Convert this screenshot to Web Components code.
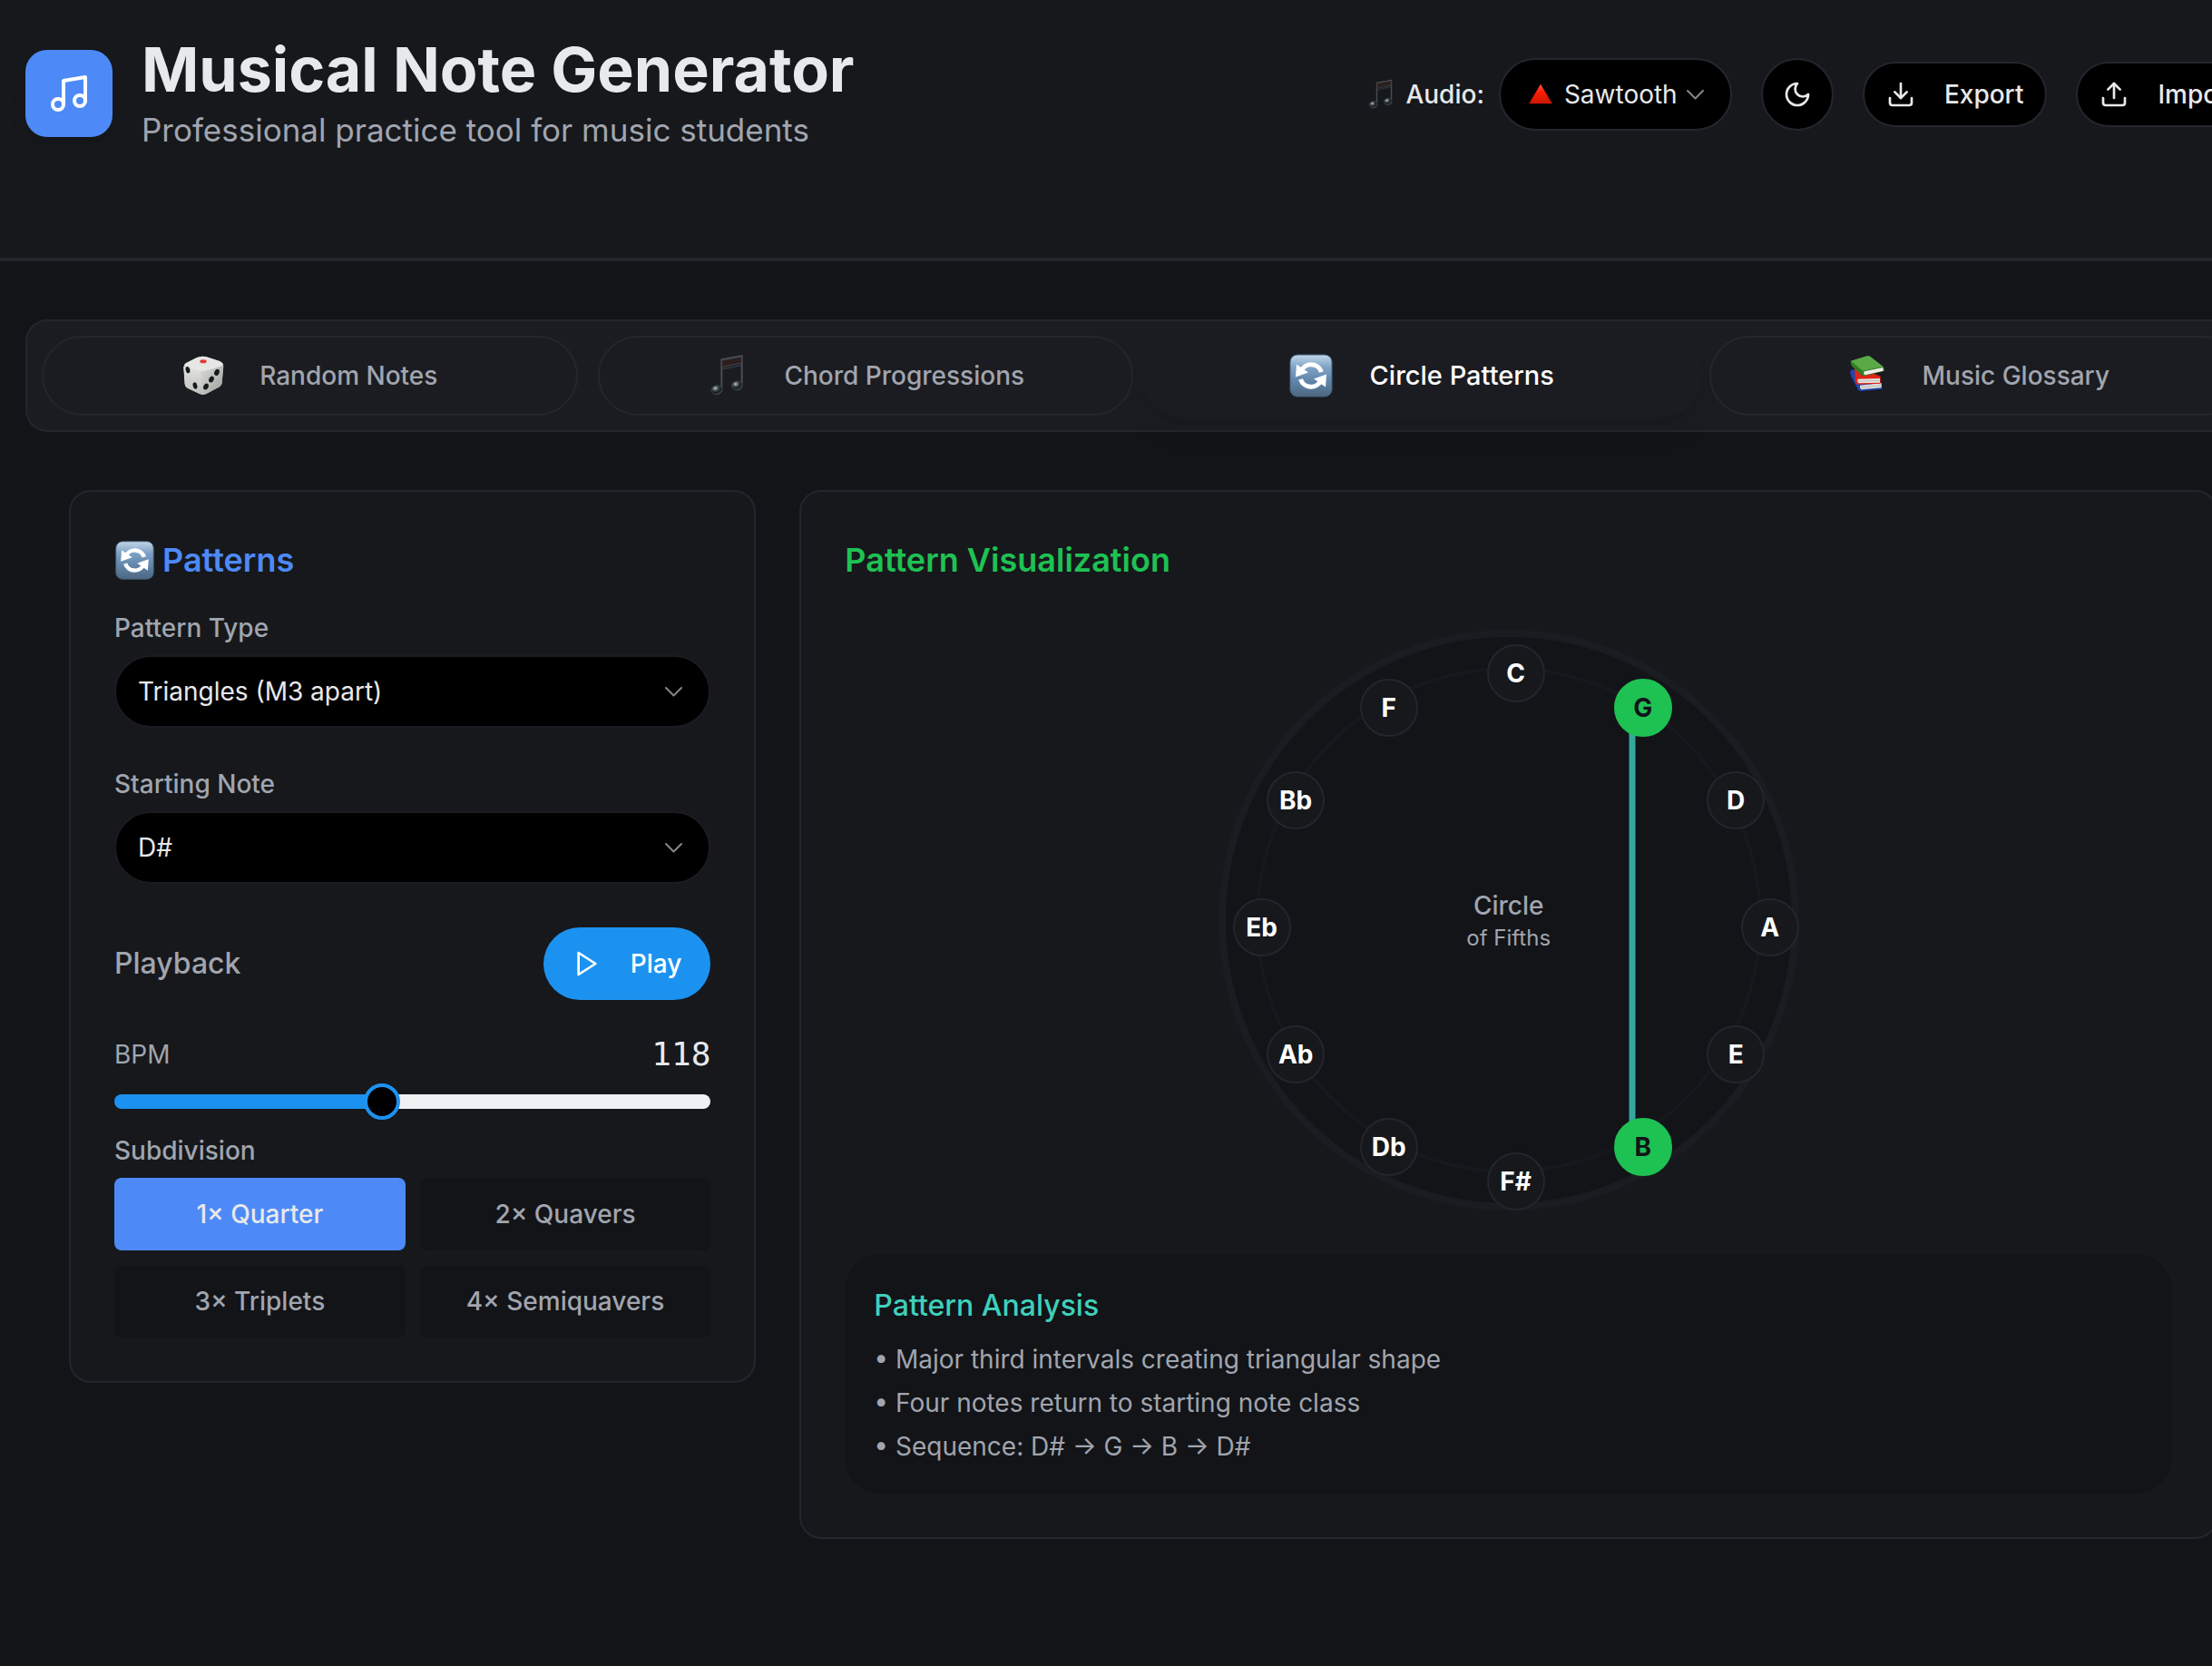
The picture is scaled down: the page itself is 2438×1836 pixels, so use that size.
<!DOCTYPE html>
<html lang="en">
<head>
<meta charset="utf-8">
<title>Musical Note Generator</title>
<style>
  html, body { margin: 0; min-height: 100%; background: #121418; }
  body { font-family: Inter, "Liberation Sans", sans-serif; color: #e8e9eb; }
</style>
</head>
<body>
<note-app></note-app>

<script>
const ICONS = {
  music: `<svg viewBox="0 0 24 24" fill="none" stroke="currentColor" stroke-width="2" stroke-linecap="round" stroke-linejoin="round"><path d="M9 18V5l12-2v13"/><circle cx="6" cy="18" r="3"/><circle cx="18" cy="16" r="3"/></svg>`,
  moon: `<svg viewBox="0 0 24 24" fill="none" stroke="currentColor" stroke-width="2" stroke-linecap="round" stroke-linejoin="round"><path d="M12 3a6 6 0 0 0 9 9 9 9 0 1 1-9-9Z"/></svg>`,
  download: `<svg viewBox="0 0 24 24" fill="none" stroke="currentColor" stroke-width="2" stroke-linecap="round" stroke-linejoin="round"><path d="M21 15v4a2 2 0 0 1-2 2H5a2 2 0 0 1-2-2v-4"/><path d="m7 10 5 5 5-5"/><path d="M12 15V3"/></svg>`,
  upload: `<svg viewBox="0 0 24 24" fill="none" stroke="currentColor" stroke-width="2" stroke-linecap="round" stroke-linejoin="round"><path d="M21 15v4a2 2 0 0 1-2 2H5a2 2 0 0 1-2-2v-4"/><path d="m17 8-5-5-5 5"/><path d="M12 3v12"/></svg>`,
  play: `<svg viewBox="0 0 24 24" fill="none" stroke="currentColor" stroke-width="2" stroke-linecap="round" stroke-linejoin="round"><path d="M5 3l14 9-14 9z"/></svg>`,
  chevron: `<svg viewBox="0 0 24 24" fill="none" stroke="currentColor" stroke-width="2" stroke-linecap="round" stroke-linejoin="round"><path d="M3 8l8.500 8.500L20 8"/></svg>`,
  triangle: `<svg viewBox="0 0 35 35"><defs><linearGradient id="t" x1="0" y1="0" x2="0" y2="1"><stop offset="0" stop-color="#ff5a40"/><stop offset=".4" stop-color="#ff1d05"/><stop offset="1" stop-color="#c91602"/></linearGradient></defs><path d="M17.500 6.500L30 27.500H5z" fill="url(#t)"/></svg>`,
  dice: `<svg viewBox="20 15 150 150"><defs><linearGradient id="l" x1="0" y1="0" x2="0" y2="1"><stop offset="0" stop-color="#e2e3e1"/><stop offset="1" stop-color="#bfc0bd"/></linearGradient><linearGradient id="r" x1="0" y1="0" x2="1" y2="1"><stop offset="0" stop-color="#dadbd9"/><stop offset="1" stop-color="#9c9e9b"/></linearGradient></defs>
    <path d="M27 62Q27 54 35 48L70 31Q86 23 102 28L146 42Q158 47 159 58L154 114Q153 122 146 127L102 150Q92 155 80 150L40 131Q32 127 31 118Z" fill="#cbccca"/>
    <path d="M27 60L80 76Q90 80 89 92L87 152L80 150L40 131Q32 127 31 118Z" fill="url(#l)"/>
    <path d="M87 88Q88 78 98 74L158 54L154 114Q153 122 146 127L102 150Q94 154 87 152Z" fill="url(#r)"/>
    <path d="M30 54Q32 50 38 47L70 31Q86 23 102 28L146 42Q153 45 157 50Q157 57 146 60L98 74Q88 78 78 75L38 63Q31 60 30 54Z" fill="#e6e7e5"/>
    <ellipse cx="92" cy="43" rx="11" ry="6" fill="#e23a35"/>
    <g fill="#171a1c"><ellipse cx="41" cy="71" rx="7" ry="11" transform="rotate(-14 41 71)"/><ellipse cx="65" cy="123" rx="7" ry="11" transform="rotate(-14 65 123)"/><ellipse cx="137" cy="79" rx="8" ry="11" transform="rotate(24 137 79)"/><ellipse cx="119" cy="102" rx="8" ry="11" transform="rotate(24 119 102)"/><ellipse cx="101" cy="126" rx="8" ry="11" transform="rotate(24 101 126)"/></g></svg>`,
  notes: `<svg viewBox="7 15 150 150"><defs><radialGradient id="n" cx=".4" cy=".3" r=".75"><stop offset="0" stop-color="#c9cfd4"/><stop offset=".3" stop-color="#4d555c"/><stop offset=".65" stop-color="#14181c"/><stop offset="1" stop-color="#46525b"/></radialGradient></defs>
    <path d="M59 130V37L126 25V115" fill="none" stroke="#454e56" stroke-width="6" stroke-linejoin="round"/>
    <path d="M60 39L125 27V48L60 62Z" fill="#2a1f1e" stroke="#48474b" stroke-width="3"/>
    <path d="M64 68L123 56" stroke="#3b4851" stroke-width="3"/>
    <ellipse cx="43" cy="137" rx="18" ry="15" fill="url(#n)" stroke="#414e57" stroke-width="2" transform="rotate(-10 43 137)"/>
    <ellipse cx="110" cy="123" rx="18" ry="15" fill="url(#n)" stroke="#414e57" stroke-width="2" transform="rotate(-10 110 123)"/></svg>`,
  books: `<svg viewBox="17 15 150 150">
    <path d="M35 76L44 68L136 112L142 134L71 141Q64 141 61 135L39 92Z" fill="#2146b0"/><path d="M68 122L139 114V130L72 136Q66 130 68 122Z" fill="#dcdcda"/><path d="M71 129L138 122" stroke="#aaa" stroke-width="2"/>
    <path d="M50 68L58 62L136 92V116L62 119Q54 118 53 110Z" fill="#dd2619"/><path d="M61 101L134 99V113L63 115Q57 109 61 101Z" fill="#e6e3df"/><path d="M62 109L133 106" stroke="#aaa" stroke-width="2"/>
    <path d="M37 42L92 25Q98 24 102 27L146 62L149 74L84 91Q78 92 72 87L42 59Q36 50 37 42Z" fill="#2f7d24"/><path d="M38 41L92 25Q98 24 102 27L145 60L84 73Q77 75 72 70Z" fill="#5aa946"/><path d="M82 76L144 63L145 74L85 88Q78 85 82 76Z" fill="#efeeea"/></svg>`,
  sync: `<svg viewBox="0 0 50 50"><defs><linearGradient id="s" x1="0" y1="0" x2="0" y2="1"><stop offset="0" stop-color="#c3d6e8"/><stop offset=".3" stop-color="#7ea3c6"/><stop offset=".6" stop-color="#6388ad"/><stop offset="1" stop-color="#4c6780"/></linearGradient></defs><rect x="2" y="2" width="46" height="46" rx="8" fill="url(#s)" stroke="#45617c" stroke-width="1"/>
    <g id="a"><path d="M14 20A12 12 0 0 1 36.500 21" fill="none" stroke="#fff" stroke-width="5"/><path d="M9 12.500L8 26.500L22 21.500Z" fill="#fff"/></g><use href="#a" transform="rotate(180 25 25)"/></svg>`
};

const define = (name, html, setup) => customElements.define(name, class extends HTMLElement {
  connectedCallback() {
    if (this.shadowRoot) return;
    const root = this.attachShadow({ mode: "open" });
    root.innerHTML = typeof html === "function" ? html(this) : html;
    if (setup) setup(this, root);
  }
});

const RESET = `*, *::before, *::after { box-sizing: border-box; } button, select, input { font: inherit; color: inherit; margin: 0; } h1, h2, h3, p, ul { margin: 0; padding: 0; }`;

define("ui-icon", el => `
  <style>:host { display: block; flex: none; width: var(--icon, 32px); height: var(--icon, 32px); } svg { display: block; width: 100%; height: 100%; }</style>
  ${ICONS[el.getAttribute("name")]}`);

/* Pill button with an optional leading icon */
define("ui-button", el => `
  <style>${RESET}
    :host { display: block; flex: none; }
    button { display: flex; align-items: center; justify-content: center; gap: 32px; height: 72px; padding: 0 24px; border: 2px solid #24262e; border-radius: 36px; background: #000; font-size: 28px; line-height: 40px; font-weight: 500; }
    :host([round]) button { width: 80px; height: 80px; padding: 0; border-radius: 40px; }
    :host([primary]) button { height: 80px; padding: 0 32px; border: 0; border-radius: 40px; background: #1c92f0; color: #fff; }
  </style>
  <button type="button" ${el.title ? `aria-label="${el.title}"` : ""}><ui-icon name="${el.getAttribute("icon")}"></ui-icon>${el.hasAttribute("round") ? "" : "<slot></slot>"}</button>`);

/* Labelled drop-down */
define("ui-select", el => `
  <style>${RESET}
    :host { display: flex; flex-direction: column; gap: 10px; }
    label { display: flex; align-items: center; gap: 8px; font-size: 28px; line-height: 40px; color: #a1a5ae; font-weight: 500; }
    .box { display: flex; align-items: center; height: 80px; padding: 0 26px 0 24px; border: 2px solid #1b1c21; border-radius: 40px; background: #000; color: #e8e9eb; }
    select { flex: 1; min-width: 0; height: 100%; padding: 0; border: 0; outline: 0; appearance: none; background: none; font-size: 28px; line-height: 40px; }
    .chevron { --icon: 24px; color: #85868a; pointer-events: none; }
    :host([inline]) { flex-direction: row; align-items: center; gap: 16px; }
    :host([inline]) label { color: #e8e9eb; }
    :host([inline]) .box { gap: 8px; padding: 0 26px; border-color: #24262e; }
    .emoji { --icon: 36px; }
  </style>
  <label for="s">${el.hasAttribute("inline") ? `<ui-icon class="emoji" name="notes"></ui-icon>` : ""}${el.getAttribute("label")}</label>
  <div class="box">${el.hasAttribute("inline") ? `<ui-icon class="emoji" name="triangle"></ui-icon>` : ""}
    <select id="s"><option>${el.getAttribute("value")}</option></select><ui-icon class="chevron" name="chevron"></ui-icon></div>`);

define("app-header", `
  <style>${RESET}
    :host { display: flex; align-items: flex-start; justify-content: space-between; padding: 36px 28px 112px; border-bottom: 4px solid #24262e; background: #16181c; }
    .brand, .tools { display: flex; align-items: center; }
    .brand { gap: 32px; }
    .tools { gap: 32px; height: 136px; }
    .logo { display: grid; place-items: center; width: 96px; height: 96px; border-radius: 24px; background: #4d8af7; color: #fff; --icon: 48px; box-shadow: 0 20px 30px -6px rgba(0,0,0,.06), 0 8px 12px -8px rgba(0,0,0,.06); }
    h1 { font-size: 68px; line-height: 80px; font-weight: 700; }
    p { font-size: 35px; line-height: 54px; color: #a1a5ae; }
  </style>
  <div class="brand">
    <div class="logo"><ui-icon name="music"></ui-icon></div>
    <div><h1>Musical Note Generator</h1><p>Professional practice tool for music students</p></div>
  </div>
  <div class="tools">
    <ui-select inline label="Audio:" value="Sawtooth"></ui-select>
    <ui-button round icon="moon" title="Toggle theme"></ui-button>
    <ui-button icon="download">Export</ui-button>
    <ui-button icon="upload">Import</ui-button>
  </div>`);

define("nav-tab", el => `
  <style>${RESET}
    :host { display: block; }
    button { display: flex; align-items: center; justify-content: center; gap: 36px; width: 100%; height: 88px; padding: 0; border: 2px solid #24262e; border-radius: 44px; background: none; color: #a1a5ae; font-size: 28px; line-height: 40px; font-weight: 500; --icon: 50px; }
    /* The selected tab grows slightly over its neighbours' gaps */
    :host([selected]) { margin: -2px -14px; }
    :host([selected]) button { gap: 40px; height: 92px; border-color: transparent; border-radius: 46px; background: #1b1c21; color: #fff; font-size: 29px; box-shadow: 0 20px 30px -6px rgba(0,0,0,.07), 0 8px 12px -8px rgba(0,0,0,.07); }
  </style>
  <button type="button" role="tab" aria-selected="${el.hasAttribute("selected")}"><ui-icon name="${el.getAttribute("icon")}"></ui-icon><slot></slot></button>`);

define("nav-tabs", `
  <style>${RESET}
    :host { display: grid; grid-template-columns: repeat(4, 1fr); gap: 22px; padding: 16px; border: 2px solid #24262e; border-radius: 24px; background: #1b1c21; }
  </style><slot></slot>`);

define("panel-card", el => `
  <style>${RESET}
    :host { display: block; padding: 48px; border: 2px solid #24262e; border-radius: 24px; background: #16181c; box-sizing: border-box; }
    h2 { display: flex; align-items: center; gap: 8px; margin-bottom: var(--title-gap, 28px); font-size: 36px; line-height: 54px; font-weight: 600; color: var(--title); --icon: 45px; }
  </style>
  <h2>${el.hasAttribute("icon") ? `<ui-icon name="${el.getAttribute("icon")}"></ui-icon>` : ""}<span>${el.getAttribute("heading")}</span></h2><slot></slot>`);

define("bpm-slider", `
  <style>${RESET}
    :host { display: block; }
    .row { display: flex; align-items: center; justify-content: space-between; height: 56px; margin-bottom: 4px; }
    label { font-size: 28px; line-height: 40px; color: #a1a5ae; }
    output { font: 36px/56px "DejaVu Sans Mono", monospace; }
    input { display: block; width: 100%; height: 40px; appearance: none; background: none; --pos: calc(20px + (100% - 40px) * .446); }
    input::-webkit-slider-runnable-track { height: 16px; border-radius: 8px; background: linear-gradient(to right, #1c92f0 var(--pos), #eff1f3 var(--pos)); }
    input::-webkit-slider-thumb { appearance: none; width: 40px; height: 40px; margin-top: -12px; border: 4px solid #1c92f0; border-radius: 50%; background: #000; }
  </style>
  <div class="row"><label for="bpm">BPM</label><output for="bpm">118</output></div>
  <input id="bpm" type="range" min="60" max="190" value="118">`);

define("subdivision-picker", `
  <style>${RESET}
    :host { display: block; }
    p { margin-bottom: 10px; font-size: 28px; line-height: 40px; font-weight: 500; color: #a1a5ae; }
    div { display: grid; grid-template-columns: 1fr 1fr; gap: 16px; }
    button { height: 80px; padding: 0; border: 0; border-radius: 8px; background: #121418; color: #a1a5ae; font-size: 28px; line-height: 40px; font-weight: 500; }
    button[aria-pressed=true] { background: #4d8af7; color: #e8e9eb; }
  </style>
  <p id="t">Subdivision</p>
  <div role="group" aria-labelledby="t">
    <button type="button" aria-pressed="true">1× Quarter</button><button type="button">2× Quavers</button>
    <button type="button">3× Triplets</button><button type="button">4× Semiquavers</button>
  </div>`);

define("pattern-controls", `
  <style>${RESET}
    :host { display: block; }
    .fields { display: grid; gap: 42px; }
    .play { display: flex; align-items: center; justify-content: space-between; margin: 48px 0 32px; }
    .play h3 { font-size: 32px; line-height: 50px; font-weight: 500; color: #a1a5ae; }
    subdivision-picker { margin-top: 14px; }
  </style>
  <div class="fields">
    <ui-select label="Pattern Type" value="Triangles (M3 apart)"></ui-select>
    <ui-select label="Starting Note" value="D#"></ui-select>
  </div>
  <div class="play"><h3>Playback</h3><ui-button primary icon="play">Play</ui-button></div>
  <bpm-slider></bpm-slider>
  <subdivision-picker></subdivision-picker>`);

/* Circle of fifths: note pins sit on a 280px radius */
define("fifths-circle", `
  <style>${RESET}
    :host { display: block; position: relative; width: 640px; height: 640px; margin: 0 auto; border: 8px solid #1b1c21; border-radius: 50%; background: #121418; box-sizing: border-box; }
    .center { display: grid; align-content: center; justify-items: center; height: 100%; color: #a1a5ae; }
    .center b { font-size: 28px; line-height: 40px; font-weight: 500; }
    .center span { font-size: 24px; line-height: 32px; }
    svg { position: absolute; inset: -8px; width: 640px; height: 640px; }
    .note { position: absolute; display: grid; place-items: center; width: 64px; height: 64px; margin: -32px; left: calc(320px + 280px * sin(var(--a))); top: calc(320px - 280px * cos(var(--a))); border: 2px solid #24252d; border-radius: 50%; background: #16181c; color: #fff; font-size: 28px; line-height: 40px; font-weight: 700; }
    .note.on { border-color: #1ec253; background: #1ec253; color: #121418; }
  </style>
  <div class="center"><b>Circle</b><span>of Fifths</span></div>
  <svg viewBox="0 0 640 640"><circle cx="320" cy="320" r="277" fill="none" stroke="#17181d" stroke-width="4"/><path d="M456 100V550" stroke="#35a89d" stroke-width="7"/></svg>`,
  (el, root) => {
    const active = ["G", "B"];
    "C G D A E B F# Db Ab Eb Bb F".split(" ").forEach((name, i) => {
      const pin = document.createElement("div");
      pin.className = active.includes(name) ? "note on" : "note";
      pin.style.setProperty("--a", i * 30 + "deg");
      pin.textContent = name;
      root.append(pin);
    });
  });

define("pattern-analysis", `
  <style>${RESET}
    :host { display: block; margin-top: 48px; padding: 32px; border-radius: 40px; background: #121418; }
    h3 { margin-bottom: 14px; font-size: 32px; line-height: 50px; font-weight: 500; color: #3fd0bb; }
    ul { display: grid; gap: 8px; list-style: none; font-size: 28px; line-height: 40px; color: #a1a5ae; }
  </style>
  <h3>Pattern Analysis</h3>
  <ul><li>• Major third intervals creating triangular shape</li><li>• Four notes return to starting note class</li><li>• Sequence: D# → G → B → D#</li></ul>`);

define("note-app", `
  <style>${RESET}
    :host { display: block; overflow: hidden; min-height: 100vh; background: #121418; }
    /* The toolbar and grid run a little past the right edge of the window */
    .page { width: calc(100% + 82px); }
    main { padding: 64px 28px 140px; }
    .grid { display: grid; grid-template-columns: repeat(3, 1fr); gap: 48px; align-items: start; padding: 64px 48px 0; }
    .wide { grid-column: span 2; --title: #1ec253; --title-gap: 50px; }
    .side { --title: #4d8af7; }
  </style>
  <div class="page">
    <app-header></app-header>
    <main>
      <nav-tabs role="tablist">
        <nav-tab icon="dice">Random Notes</nav-tab>
        <nav-tab icon="notes">Chord Progressions</nav-tab>
        <nav-tab icon="sync" selected>Circle Patterns</nav-tab>
        <nav-tab icon="books">Music Glossary</nav-tab>
      </nav-tabs>
      <div class="grid">
        <panel-card class="side" icon="sync" heading="Patterns"><pattern-controls></pattern-controls></panel-card>
        <panel-card class="wide" heading="Pattern Visualization"><fifths-circle></fifths-circle><pattern-analysis></pattern-analysis></panel-card>
      </div>
    </main>
  </div>`);
</script>
</body>
</html>
